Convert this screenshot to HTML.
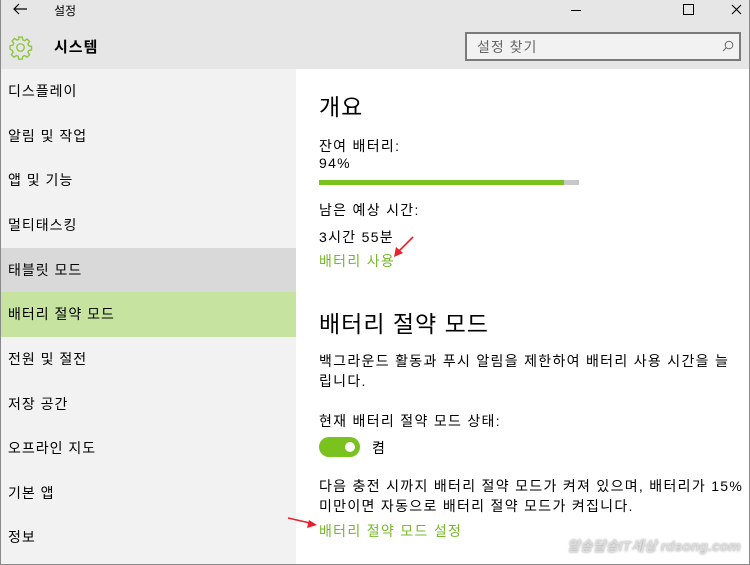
<!DOCTYPE html>
<html><head><meta charset="utf-8"><style>
*{margin:0;padding:0;box-sizing:border-box}
body{width:750px;height:565px;overflow:hidden;background:#fff;font-family:"Liberation Sans","Noto Sans CJK KR",sans-serif;color:#000;position:relative}
.a{position:absolute;white-space:nowrap}
.top{left:0;top:0;width:750px;height:69px;background:#e6e6e6}
.side{left:0;top:69px;width:296px;height:496px;background:#f2f2f2}
.it{position:absolute;left:0;width:296px;height:44.5px;font-size:14px;line-height:44px;padding-left:8px;letter-spacing:1px}
.t{font-size:14px;letter-spacing:1.3px}
.g{color:#76b82a;font-size:14px;letter-spacing:1.3px}
.h{font-size:23px;color:#000;letter-spacing:1px}
</style></head><body>
<div class="a top"></div>
<div class="a" style="left:0;top:0;width:750px;height:565px;border:1px solid #8a8a8a;border-top:none;z-index:5;pointer-events:none"></div>
<svg class="a" style="left:12px;top:2px" width="16" height="14" viewBox="0 0 16 14"><path d="M15 7H2M7 2L2 7l5 5" stroke="#000" stroke-width="1.2" fill="none"/></svg>
<div class="a" style="left:54px;top:2px;font-size:12px">설정</div>
<svg class="a" style="left:571px;top:4px" width="180" height="12"><path d="M0 6.5h10" stroke="#000"/><rect x="112.5" y="0.5" width="10" height="10" fill="none" stroke="#000"/><path d="M161 1l9 9M170 1l-9 9" stroke="#000" stroke-width="1.1"/></svg>
<svg class="a" style="left:8px;top:35px" width="25" height="25" viewBox="0 0 24 24"><path fill="none" stroke="#8cc63f" stroke-width="1.3" d="M10.3 2h3.4l.5 2.7 1.8.8 2.3-1.6 2.4 2.4-1.6 2.3.8 1.8 2.7.5v3.4l-2.7.5-.8 1.8 1.6 2.3-2.4 2.4-2.3-1.6-1.8.8-.5 2.7h-3.4l-.5-2.7-1.8-.8-2.3 1.600-2.4-2.4 1.6-2.3-.8-1.8L2 13.7v-3.4l2.7-.5.8-1.8-1.6-2.3 2.4-2.4 2.3 1.6 1.8-.8z"/><circle cx="12" cy="12" r="3.6" fill="none" stroke="#8cc63f" stroke-width="1.3"/></svg>
<div class="a" style="left:54px;top:36px;font-size:15px;font-weight:bold;letter-spacing:1px">시스템</div>
<div class="a" style="left:465px;top:32px;width:276px;height:29px;border:2px solid #7a7a7a;background:#f2f2f2"></div>
<div class="a" style="left:477px;top:37px;font-size:14px;color:#666;letter-spacing:1px">설정 찾기</div>
<svg class="a" style="left:722px;top:40px" width="12" height="12"><circle cx="7" cy="5" r="3.8" fill="none" stroke="#666"/><path d="M4.3 7.7L1 11" stroke="#666"/></svg>
<div class="a side">
<div class="it" style="top:0">디스플레이</div>
<div class="it" style="top:44.5px">알림 및 작업</div>
<div class="it" style="top:89px">앱 및 기능</div>
<div class="it" style="top:133.5px">멀티태스킹</div>
<div class="it" style="top:179px;background:#d9d9d9">태블릿 모드</div>
<div class="it" style="top:223px;background:#c6e4a0">배터리 절약 모드</div>
<div class="it" style="top:268px">전원 및 절전</div>
<div class="it" style="top:312.5px">저장 공간</div>
<div class="it" style="top:357px">오프라인 지도</div>
<div class="it" style="top:401.5px">기본 앱</div>
<div class="it" style="top:446px">정보</div>
</div>
<div class="a h" style="left:319px;top:88px">개요</div>
<div class="a t" style="left:319px;top:136px">잔여 배터리:</div>
<div class="a t" style="left:319px;top:155px">94%</div>
<div class="a" style="left:319px;top:180px;width:260px;height:5px;background:#c8c8c8"><div style="width:245px;height:5px;background:#7ac21e"></div></div>
<div class="a t" style="left:319px;top:200px">남은 예상 시간:</div>
<div class="a t" style="left:319px;top:227px">3시간 55분</div>
<div class="a g" style="left:319px;top:251px">배터리 사용</div>
<svg class="a" style="left:280px;top:235px" width="140" height="300"><path d="M133 2L118 17" stroke="#e8202a" stroke-width="1.6"/><path d="M114 22l2-10 7 6z" fill="#e8202a"/><path d="M8 283l22 5" stroke="#e8202a" stroke-width="1.6"/><path d="M37 290l-10 3 2-8z" fill="#e8202a"/></svg>
<div class="a h" style="left:319px;top:305px">배터리 절약 모드</div>
<div class="a t" style="left:319px;top:351px">백그라운드 활동과 푸시 알림을 제한하여 배터리 사용 시간을 늘</div>
<div class="a t" style="left:319px;top:371px">립니다.</div>
<div class="a t" style="left:319px;top:411px">현재 배터리 절약 모드 상태:</div>
<div class="a" style="left:319px;top:437px;width:41px;height:20px;border-radius:10px;background:#7ac21e"><div style="position:absolute;right:5px;top:5px;width:10px;height:10px;border-radius:5px;background:#fff"></div></div>
<div class="a t" style="left:372px;top:438px">켬</div>
<div class="a t" style="left:319px;top:476px">다음 충전 시까지 배터리 절약 모드가 켜져 있으며, 배터리가 15%</div>
<div class="a t" style="left:319px;top:496px">미만이면 자동으로 배터리 절약 모드가 켜집니다.</div>
<div class="a g" style="left:319px;top:521px">배터리 절약 모드 설정</div>
<div class="a" style="left:567px;top:536px;font-size:14px;font-weight:bold;font-style:italic;color:#ddd;text-shadow:0 0 2px #999">알송달송IT세상 rdsong.com</div>
</body></html>
